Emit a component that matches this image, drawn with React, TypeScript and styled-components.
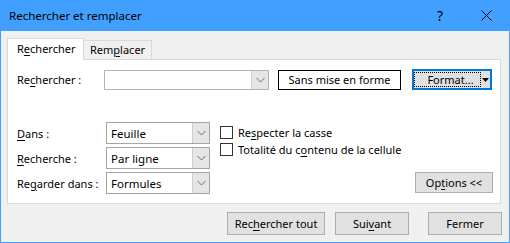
import { FC, ReactNode } from "react";
import styled, { createGlobalStyle } from "styled-components";

const GlobalStyle = createGlobalStyle`
  html, body {
    margin: 0;
    padding: 0;
    background: #ffffff;
  }
  body {
    font-family: "Noto Sans", "Open Sans", sans-serif;
    font-size: 11px;
    color: #000;
  }
`;

const Window = styled.div`
  width: 510px;
  height: 243px;
  box-sizing: border-box;
  border: 1px solid #419fff;
  border-top: none;
  background: #f0f0f0;
  display: flex;
  flex-direction: column;
`;

const TitleBar = styled.div`
  height: 31px;
  background: #419fff;
  display: flex;
  align-items: center;
  padding-left: 8px;
  font-size: 11.5px;
`;

const Title = styled.div`
  flex: 1;
`;

const TitleIcon = styled.div`
  width: 46px;
  height: 31px;
  display: flex;
  align-items: center;
  justify-content: center;
  font-size: 14px;
`;

const Body = styled.div`
  padding: 7px 7px 0 6px;
  display: flex;
  flex-direction: column;
`;

const Tabs = styled.div`
  display: flex;
  align-items: flex-end;
  height: 21px;
`;

const Tab = styled.div<{ active?: boolean }>`
  box-sizing: border-box;
  height: ${(p) => (p.active ? "22px" : "19px")};
  margin-bottom: ${(p) => (p.active ? "-1px" : "0")};
  padding: ${(p) => (p.active ? "2px 0 0 9px" : "1px 0 0 6px")};
  width: ${(p) => (p.active ? "77px" : "68px")};
  background: ${(p) => (p.active ? "#ffffff" : "#f0f0f0")};
  border: 1px solid #d9d9d9;
  border-bottom: none;
  border-left: ${(p) => (p.active ? "1px solid #d9d9d9" : "none")};
  position: relative;
  z-index: ${(p) => (p.active ? 1 : 0)};
`;

const Panel = styled.div`
  width: 494px;
  box-sizing: border-box;
  background: #ffffff;
  border: 1px solid #d9d9d9;
  padding: 9px 8px 9px 9px;
  display: flex;
  flex-direction: column;
`;

const SearchRow = styled.div`
  display: flex;
  align-items: center;
  height: 21px;
`;

const Label = styled.div<{ width: number }>`
  width: ${(p) => p.width}px;
  flex-shrink: 0;
`;

const Combo = styled.div<{ width: number; height: number; borderColor: string }>`
  width: ${(p) => p.width}px;
  height: ${(p) => p.height}px;
  box-sizing: border-box;
  border: 1px solid ${(p) => p.borderColor};
  background: #fff;
  display: flex;
  align-items: stretch;
`;

const ComboText = styled.div`
  flex: 1;
  display: flex;
  align-items: center;
  padding-left: 4px;
  font-size: 11.5px;
`;

const ComboButton = styled.div`
  width: 16px;
  background: #e5e5e5;
  border-left: 1px solid #cfcfcf;
  display: flex;
  align-items: center;
  justify-content: center;
`;

const FormatLabel = styled.div`
  margin-left: 9px;
  width: 123px;
  height: 20px;
  box-sizing: border-box;
  border: 1px solid #000;
  display: flex;
  align-items: center;
  justify-content: center;
`;

const FormatButton = styled.div`
  margin-left: 11px;
  width: 80px;
  height: 21px;
  box-sizing: border-box;
  border: 2px solid #0078d7;
  background: #e1e1e1;
  display: flex;
  align-items: stretch;
  padding: 1px 0;
`;

const FocusText = styled.div`
  flex: 1;
  border: 1px dotted #000;
  display: flex;
  align-items: center;
  justify-content: center;
  padding-left: 6px;
`;

const SplitArrow = styled.div`
  width: 9px;
  display: flex;
  align-items: center;
  justify-content: center;
`;

const Lower = styled.div`
  display: flex;
  margin-top: 32px;
`;

const Fields = styled.div`
  display: flex;
  flex-direction: column;
  gap: 3px;
`;

const FieldRow = styled.div`
  display: flex;
  align-items: center;
`;

const Side = styled.div`
  flex: 1;
  margin-left: 10px;
  padding-top: 2px;
  display: flex;
  flex-direction: column;
`;

const CheckRow = styled.div`
  display: flex;
  align-items: center;
  height: 16px;
  margin-bottom: 1px;
`;

const Box = styled.div`
  width: 13px;
  height: 13px;
  box-sizing: border-box;
  border: 1px solid #333;
  background: #fff;
  margin-right: 5px;
`;

const Spacer = styled.div`
  flex: 1;
`;

const Button = styled.div<{ width: number; height?: number; offset?: number }>`
  width: ${(p) => p.width}px;
  height: ${(p) => p.height ?? 23}px;
  margin-left: ${(p) => p.offset ?? 0}px;
  box-sizing: border-box;
  background: #e1e1e1;
  border: 1px solid #adadad;
  display: flex;
  align-items: center;
  justify-content: center;
`;

const OptionsWrap = styled.div`
  display: flex;
  justify-content: flex-end;
  margin-right: -1px;
  margin-bottom: 1px;
`;

const Footer = styled.div`
  display: flex;
  justify-content: flex-end;
  margin-top: 8px;
  gap: 10px;
`;

const U = styled.span`
  text-decoration: underline;
  text-underline-offset: 2px;
`;

const Chevron = () => (
  <svg width="9" height="6" viewBox="0 0 9 6">
    <path d="M0.5 1 L4.5 5 L8.5 1" fill="none" stroke="#6d6d6d" strokeWidth="1" />
  </svg>
);

const Select: FC<{ children: ReactNode }> = ({ children }) => (
  <Combo width={104} height={22} borderColor="#a5a5a5">
    <ComboText>{children}</ComboText>
    <ComboButton>
      <Chevron />
    </ComboButton>
  </Combo>
);

const App: FC = () => {
  return (
    <>
      <GlobalStyle />
      <Window>
        <TitleBar>
          <Title>Rechercher et remplacer</Title>
          <TitleIcon>?</TitleIcon>
          <TitleIcon>
            <svg width="11" height="11" viewBox="0 0 11 11">
              <path d="M0.5 0.5 L10.5 10.5 M10.5 0.5 L0.5 10.5" stroke="#000" strokeWidth="1" />
            </svg>
          </TitleIcon>
        </TitleBar>
        <Body>
          <Tabs>
            <Tab active>
              R<U>e</U>chercher
            </Tab>
            <Tab>
              Rem<U>p</U>lacer
            </Tab>
          </Tabs>
          <Panel>
            <SearchRow>
              <Label width={87}>
                Re<U>c</U>hercher :
              </Label>
              <Combo width={165} height={20} borderColor="#b3b3b3">
                <ComboText />
                <ComboButton>
                  <Chevron />
                </ComboButton>
              </Combo>
              <FormatLabel>Sans mise en forme</FormatLabel>
              <FormatButton>
                <FocusText>Format...</FocusText>
                <SplitArrow>
                  <svg width="7" height="4" viewBox="0 0 7 4">
                    <path d="M0 0 H7 L3.5 4 Z" fill="#000" />
                  </svg>
                </SplitArrow>
              </FormatButton>
            </SearchRow>
            <Lower>
              <Fields>
                <FieldRow>
                  <Label width={89}>
                    <U>D</U>ans :
                  </Label>
                  <Select>Feuille</Select>
                </FieldRow>
                <FieldRow>
                  <Label width={89}>
                    <U>R</U>echerche :
                  </Label>
                  <Select>Par ligne</Select>
                </FieldRow>
                <FieldRow>
                  <Label width={89}>
                    Re<U>g</U>arder dans :
                  </Label>
                  <Select>Formules</Select>
                </FieldRow>
              </Fields>
              <Side>
                <CheckRow>
                  <Box />
                  Re<U>s</U>pecter la casse
                </CheckRow>
                <CheckRow>
                  <Box />
                  Totalité du c<U>o</U>ntenu de la cellule
                </CheckRow>
                <Spacer />
                <OptionsWrap>
                  <Button width={78} height={21}>
                    Op<U>t</U>ions &lt;&lt;
                  </Button>
                </OptionsWrap>
              </Side>
            </Lower>
          </Panel>
          <Footer>
            <Button width={98}>
              Rec<U>h</U>ercher tout
            </Button>
            <Button width={74}>
              Sui<U>v</U>ant
            </Button>
            <Button width={74} offset={9}>
              Fermer
            </Button>
          </Footer>
        </Body>
      </Window>
    </>
  );
};

export default App;
